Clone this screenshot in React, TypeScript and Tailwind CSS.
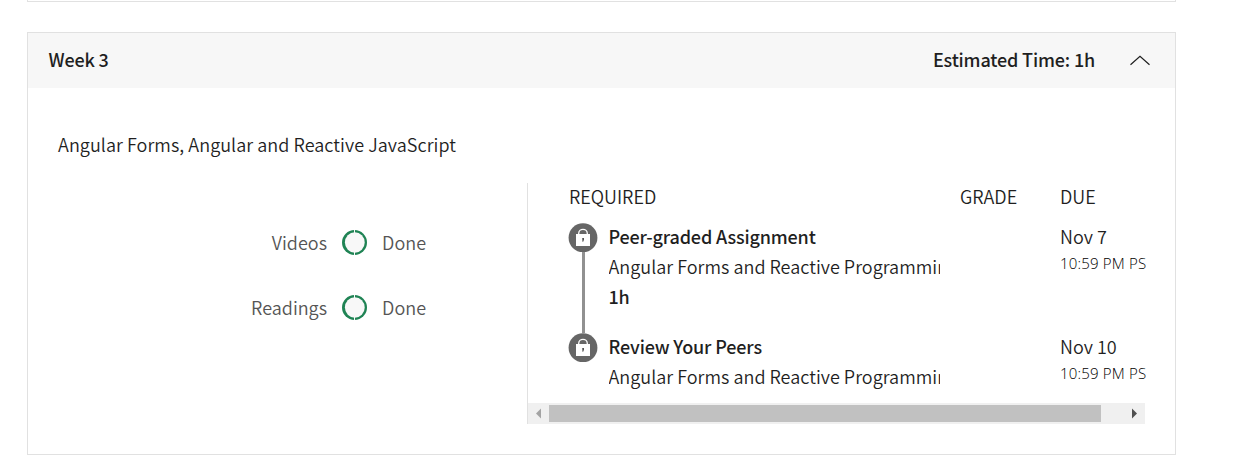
import React from 'react';

const sans = "font-['Noto_Sans_CJK_SC',sans-serif]";

function LockBadge() {
  return (
    <svg className="block shrink-0" width="30" height="30" viewBox="0 0 30 30">
      <circle cx="15" cy="14.7" r="14.4" fill="#666" />
      <path d="M10.7 12V10.4a4.3 4.1 0 0 1 8.6 0V12" fill="none" stroke="#fff" strokeWidth="1.3" />
      <rect x="8" y="11" width="14" height="12" fill="#fff" />
      <path d="M14.2 14.9h1.8v1.8l-.8 2h-.8z" fill="#555" />
    </svg>
  );
}

function Ring() {
  return (
    <svg className="block shrink-0" width="25" height="25" viewBox="0 0 25 25">
      <circle cx="12.5" cy="12.5" r="12.5" fill="#1f8354" />
      <ellipse cx="12.8" cy="12.5" rx="9.9" ry="10.2" fill="#f8f8f8" />
      <rect x="12" width="1" height="25" fill="#f8f8f8" />
    </svg>
  );
}

function Progress({ label }: { label: string }) {
  return (
    <div className="flex h-[65px] items-start text-[#555]">
      <div className="w-[299px] text-right leading-[30px]">{label}</div>
      <div className="ml-[15px] mt-[3px]"><Ring /></div>
      <div className="ml-[15px] leading-[30px] tracking-[0.1px]">Done</div>
    </div>
  );
}

interface TaskProps {
  title: string;
  duration?: string;
  due: string;
}

function Task({ title, duration, due }: TaskProps) {
  return (
    <div className={duration ? 'flex h-[110px]' : 'flex h-[73px]'}>
      <div className="mt-[2px] flex w-[30px] shrink-0 flex-col items-center">
        <LockBadge />
        {duration && <div className="-mt-px ml-[1px] h-[81px] w-[3px] shrink-0 bg-[#919191]" />}
      </div>
      <div className="ml-[10.5px] w-[331.5px] shrink-0 overflow-hidden whitespace-nowrap leading-[30px]">
        <div className="font-medium tracking-[-0.16px]">{title}</div>
        <div className="tracking-[0.02px]">Angular Forms and Reactive Programming</div>
        {duration && <div className="font-medium tracking-[-0.16px]">{duration}</div>}
      </div>
      <div className="ml-[120px] whitespace-nowrap">
        <div className="leading-[30px]">{due}</div>
        <div className="mt-px font-['Open_Sans',sans-serif] text-[15px] font-[350] leading-[22px] tracking-[0.18px] text-black">10:59 PM PS</div>
      </div>
    </div>
  );
}

export default function App() {
  return (
    <div className={`${sans} h-[472px] w-[1258px] overflow-hidden bg-white pl-[27px] text-[18px] font-[350] text-[#1f1f1f]`}>
      <div className="h-[2px] w-[1149px] border border-t-0 border-[#e1e1e1]" />
      <section className="mt-[30px] h-[423px] w-[1149px] border border-[#e1e1e1]">
        <header className="flex h-[55px] items-center bg-[#f7f7f7] pl-[20.5px] pr-[24px] font-medium tracking-[-0.16px]">
          <h2 className="pb-[2px]">Week 3</h2>
          <div className="ml-auto pb-[2px]">Estimated Time: 1h</div>
          <svg className="ml-[34px]" width="22" height="12" viewBox="0 0 22 12">
            <path d="M1.5 9.7 11 1.2l9.5 8.5" fill="none" stroke="#1f1f1f" strokeWidth="1.2" />
          </svg>
        </header>
        <p className="ml-[30px] mt-[41px] leading-[30px] tracking-[0.055px]">Angular Forms, Angular and Reactive JavaScript</p>
        <div className="mt-[24px] flex">
          <div className="w-[499px] pt-[44px]">
            <Progress label="Videos" />
            <Progress label="Readings" />
          </div>
          <div className="h-[241px] w-[618px] border-l border-[#e1e1e1]">
            <div className="flex h-[38px] pl-[41px] leading-[26px]">
              <div className="w-[391px]">REQUIRED</div>
              <div className="w-[100px]">GRADE</div>
              <div>DUE</div>
            </div>
            <div className="h-[182px] pl-[40px]">
              <Task title="Peer-graded Assignment" duration="1h" due="Nov 7" />
              <Task title="Review Your Peers" due="Nov 10" />
            </div>
            <div className="flex h-[21px] items-center bg-[#f0f0f0]">
              <svg width="21" height="21" viewBox="0 0 21 21"><path d="M13 5.5v10L8 10.5z" fill="#a3a3a3" /></svg>
              <div className="h-[17px] w-[552px] bg-[#c1c1c1]" />
              <svg className="ml-auto" width="21" height="21" viewBox="0 0 21 21"><path d="M8 5.5v10l5-5z" fill="#505050" /></svg>
            </div>
          </div>
        </div>
      </section>
    </div>
  );
}
